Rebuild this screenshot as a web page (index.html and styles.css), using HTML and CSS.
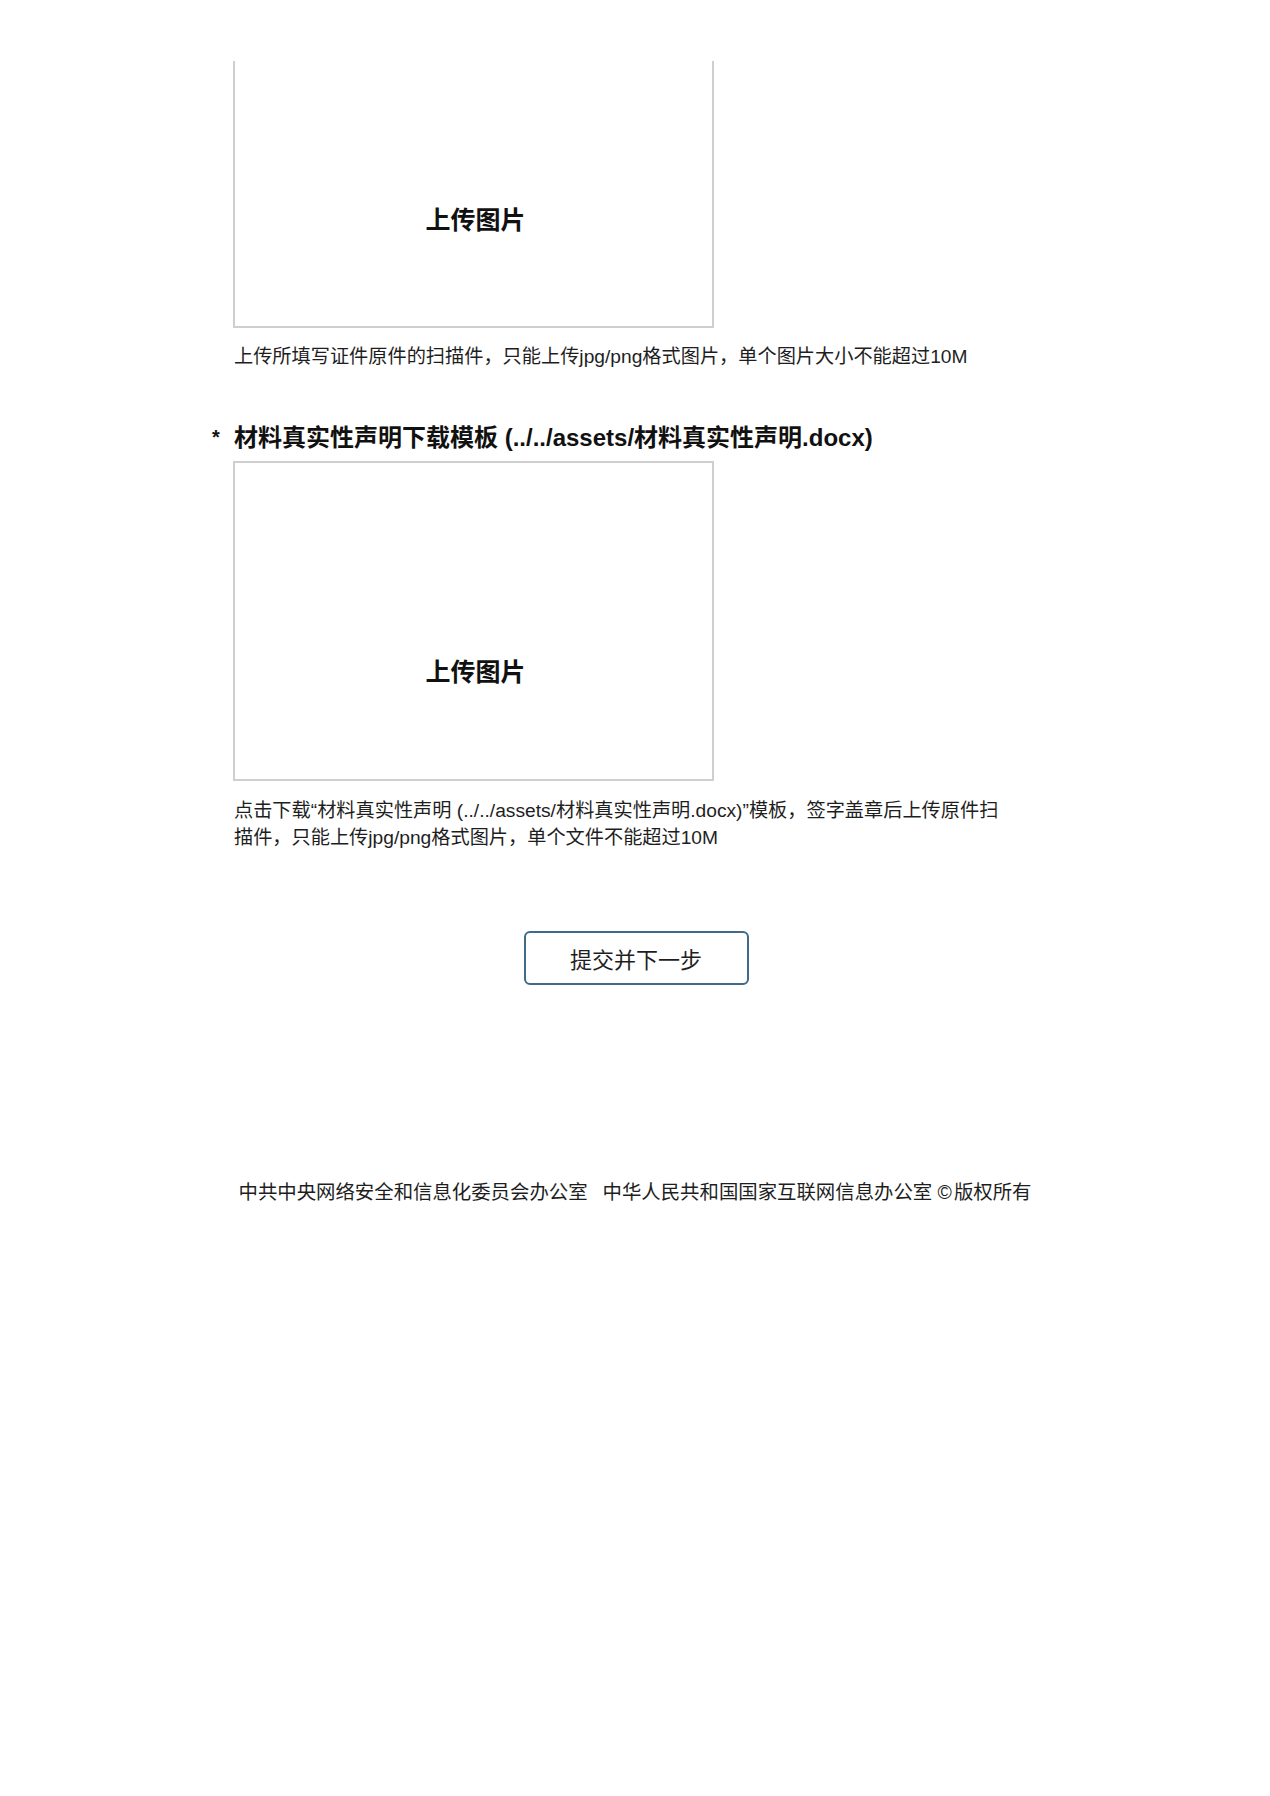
FILE: index.html
```html
<!DOCTYPE html>
<html lang="zh-CN">
<head>
<meta charset="utf-8">
<title>上传材料</title>
<link rel="stylesheet" href="styles.css">
</head>
<body>
<div class="page">
  <section class="form">
    <div class="field">
      <div class="upload upload--cut">
        <span class="upload-label">上传图片</span>
      </div>
      <p class="hint">上传所填写证件原件的扫描件，只能上传jpg/png格式图片，单个图片大小不能超过10M</p>
    </div>

    <div class="field field--second">
      <h2 class="field-title"><span class="star">*</span>材料真实性声明下载模板 (../../assets/材料真实性声明.docx)</h2>
      <div class="upload">
        <span class="upload-label">上传图片</span>
      </div>
      <p class="hint hint--wrap">点击下载“材料真实性声明 (../../assets/材料真实性声明.docx)”模板，签字盖章后上传原件扫描件，只能上传jpg/png格式图片，单个文件不能超过10M</p>
    </div>
  </section>

  <div class="actions">
    <button class="btn" type="button">提交并下一步</button>
  </div>

  <footer class="footer">
    <span>中共中央网络安全和信息化委员会办公室</span><span class="footer-gap">中华人民共和国国家互联网信息办公室</span> <span class="copy">©</span>版权所有
  </footer>
</div>
</body>
</html>
```

FILE: styles.css
```css
html, body {
  margin: 0;
  padding: 0;
  background: #ffffff;
}

body {
  font-family: "Liberation Sans", "Noto Sans CJK SC", sans-serif;
  color: #1e1e1e;
}

.page {
  width: 1270px;
  padding-top: 61px;
}

.form {
  padding-left: 233px;
}

.field {
  display: flex;
  flex-direction: column;
}

.field--second {
  margin-top: 50px;
}

.upload {
  box-sizing: border-box;
  width: 481px;
  height: 320px;
  border: 2px solid #cfcfcf;
  display: flex;
  align-items: center;
  justify-content: center;
  padding-top: 102px;
}

.upload--cut {
  height: 267px;
  border-top: none;
  padding-top: 52px;
}

.upload-label {
  font-size: 25px;
  font-weight: bold;
  line-height: 34px;
  color: #111;
  padding-left: 4px;
}

.hint {
  margin: 15px 0 0 1px;
  font-size: 19.2px;
  line-height: 28px;
  color: #1e1e1e;
}

.hint--wrap {
  margin-top: 16px;
  width: 779px;
  line-height: 27px;
}

.field-title {
  margin: 0 0 7px 1px;
  font-size: 24px;
  line-height: 32px;
  font-weight: bold;
  color: #111;
}

.star {
  display: inline-block;
  width: 22px;
  margin-left: -22px;
  font-size: 20px;
  vertical-align: 2px;
}

.actions {
  display: flex;
  justify-content: center;
  margin-top: 80px;
  padding-left: 2px;
}

.btn {
  box-sizing: border-box;
  width: 225px;
  height: 54px;
  border: 2px solid #3f6a88;
  border-radius: 6px;
  background: #ffffff;
  font-family: "Liberation Sans", "Noto Sans CJK SC", sans-serif;
  font-size: 22px;
  color: #1e1e1e;
  padding: 0;
}

.footer {
  margin-top: 193px;
  text-align: center;
  font-size: 19.4px;
  line-height: 28px;
  color: #1e1e1e;
}

.footer-gap {
  margin-left: 15px;
}

.copy {
  margin-right: 2px;
}
```
